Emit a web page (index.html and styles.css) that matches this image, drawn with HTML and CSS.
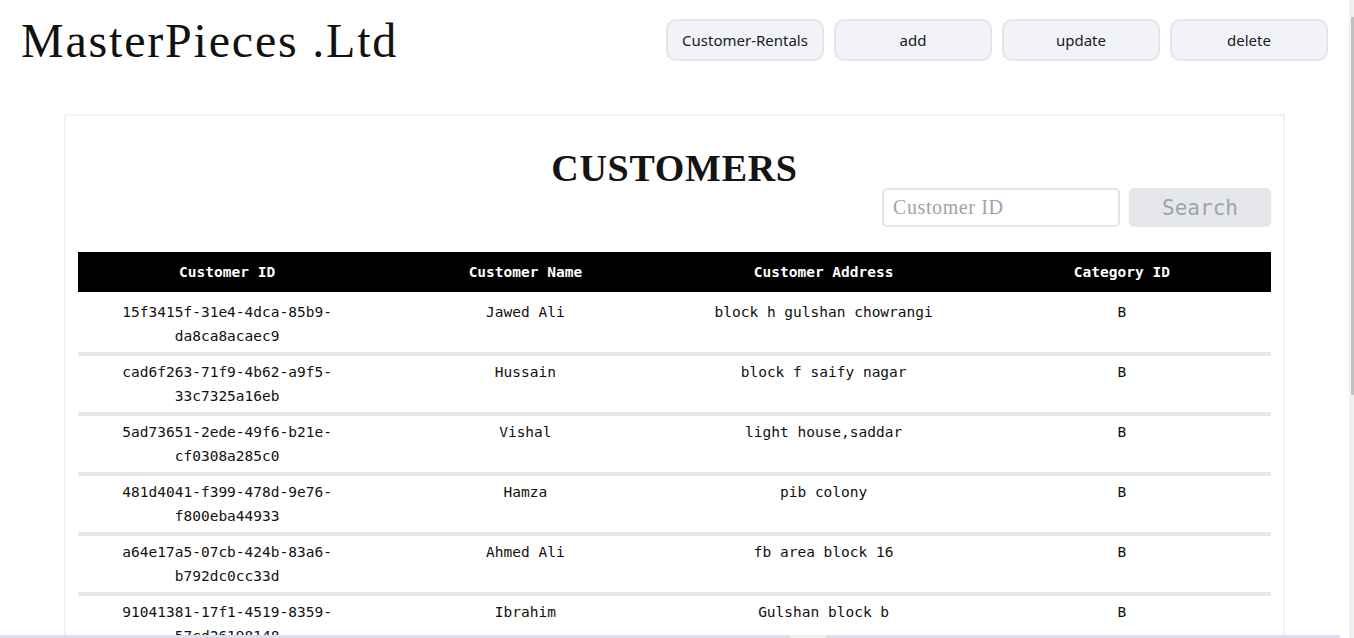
FILE: index.html
```html
<!DOCTYPE html>
<html>
<head>
<meta charset="utf-8">
<title>MasterPieces .Ltd</title>
<link rel="stylesheet" href="styles.css">
</head>
<body>
<header class="topbar">
  <h1 class="brand">MasterPieces .Ltd</h1>
  <nav class="actions">
    <button class="nav-btn">Customer-Rentals</button>
    <button class="nav-btn">add</button>
    <button class="nav-btn">update</button>
    <button class="nav-btn">delete</button>
  </nav>
</header>
<main class="card">
  <h2 class="card-title">CUSTOMERS</h2>
  <div class="search-row">
    <input class="search-input" type="text" placeholder="Customer ID">
    <button class="search-btn">Search</button>
  </div>
  <table class="data">
    <thead>
      <tr><th>Customer ID</th><th>Customer Name</th><th>Customer Address</th><th>Category ID</th></tr>
    </thead>
    <tbody>
      <tr><td>15f3415f-31e4-4dca-85b9-da8ca8acaec9</td><td>Jawed Ali</td><td>block h gulshan chowrangi</td><td>B</td></tr>
      <tr><td>cad6f263-71f9-4b62-a9f5-33c7325a16eb</td><td>Hussain</td><td>block f saify nagar</td><td>B</td></tr>
      <tr><td>5ad73651-2ede-49f6-b21e-cf0308a285c0</td><td>Vishal</td><td>light house,saddar</td><td>B</td></tr>
      <tr><td>481d4041-f399-478d-9e76-f800eba44933</td><td>Hamza</td><td>pib colony</td><td>B</td></tr>
      <tr><td>a64e17a5-07cb-424b-83a6-b792dc0cc33d</td><td>Ahmed Ali</td><td>fb area block 16</td><td>B</td></tr>
      <tr><td>91041381-17f1-4519-8359-57cd26198148</td><td>Ibrahim</td><td>Gulshan block b</td><td>B</td></tr>
      <tr><td>2b8e4c71-5d0a-4f3e-9a61-7c2e8f14d0b3</td><td>Usman</td><td>north nazimabad block a</td><td>A</td></tr>
      <tr><td>e7c91f02-3b6d-4a58-8e20-1f9d4b7a6c25</td><td>Bilal</td><td>clifton block 5</td><td>B</td></tr>
      <tr><td>0f4a6d93-8c1e-47b2-b5d7-3e60a9c28f11</td><td>Saad</td><td>defence phase 2</td><td>A</td></tr>
      <tr><td>c3d58e27-9a4f-4e16-82b0-6d1f7c3e9a40</td><td>Faisal</td><td>korangi sector 3</td><td>B</td></tr>
      <tr><td>7a19b6e4-2f03-4c8d-a7e5-94b0d2c61f38</td><td>Kashif</td><td>malir cantt</td><td>B</td></tr>
      <tr><td>d6e2f840-5b7a-41c9-9e13-8a4c0f2b7d56</td><td>Zubair</td><td>gulistan-e-johar block 7</td><td>B</td></tr>
    </tbody>
  </table>
</main>
<div class="vscroll"><div class="vscroll-thumb"></div></div>
<div class="hscroll"><div class="hscroll-gap"></div></div>
</body>
</html>
```

FILE: styles.css
```css
html {
  background: #ffffff;
}

body {
  margin: 0 5px 0 0;
  color: #111111;
  font-family: "Liberation Serif", serif;
}

.topbar {
  display: flex;
  justify-content: space-between;
  align-items: flex-start;
  padding: 0 21px 0 21px;
  height: 114px;
}

.brand {
  margin: 13px 0 0 0;
  font-family: "Liberation Serif", serif;
  font-weight: normal;
  font-size: 48px;
  letter-spacing: 1.8px;
  line-height: 56px;
  color: #111111;
}

.actions {
  display: flex;
  gap: 10px;
  margin-top: 19px;
}

.nav-btn {
  width: 158px;
  height: 42px;
  background: #f1f3f8;
  border: 2px solid #e3e6eb;
  border-radius: 10px;
  font-family: "Noto Sans", "Open Sans", sans-serif;
  font-size: 15px;
  color: #1a1a1a;
  padding: 0;
}

.card {
  width: 1221px;
  box-sizing: border-box;
  margin: 0 auto;
  border: 2px solid #f3f3f4;
  padding: 0 12px 24px 12px;
}

.card-title {
  margin: 30px 0 0 0;
  text-align: center;
  font-family: "Liberation Serif", serif;
  font-weight: bold;
  font-size: 38px;
  letter-spacing: 0.7px;
  line-height: 44px;
  color: #141414;
}

.search-row {
  display: flex;
  justify-content: flex-end;
  gap: 9px;
  margin-top: -2px;
}

.search-input {
  width: 238px;
  height: 39px;
  box-sizing: border-box;
  border: 2px solid #e4e6ea;
  border-radius: 5px;
  padding: 0 9px;
  font-family: "Liberation Serif", serif;
  font-size: 20px;
  letter-spacing: 0.6px;
  color: #333;
  outline: none;
}
.search-input::placeholder {
  color: #9ca3af;
}

.search-btn {
  width: 142px;
  height: 39px;
  border: none;
  border-radius: 5px;
  background: #e5e7eb;
  color: #9ca3af;
  font-family: "DejaVu Sans Mono", monospace;
  font-size: 21px;
  padding: 0;
}

.data {
  width: 100%;
  margin-top: 25px;
  border-collapse: collapse;
  table-layout: fixed;
  font-family: "DejaVu Sans Mono", monospace;
  font-size: 14.5px;
}

.data th {
  background: #000000;
  color: #ffffff;
  font-weight: bold;
  height: 40px;
  padding: 0;
  font-size: 14.5px;
}

.data td {
  text-align: center;
  vertical-align: top;
  padding: 4px 28px 4px 28px;
  line-height: 24px;
  border-bottom: 4px solid #e5e7eb;
  color: #111111;
}

.data tbody tr:first-child td {
  padding-top: 8px;
}

.vscroll {
  position: fixed;
  top: 0;
  right: 0;
  width: 5px;
  height: 100%;
  background: #f0f0f0;
}

.vscroll-thumb {
  position: absolute;
  top: 17px;
  right: 0;
  width: 3px;
  height: 378px;
  background: #c1c1c1;
}

.hscroll {
  position: fixed;
  left: 0;
  right: 14px;
  bottom: 0;
  height: 3px;
  background: #dadfe9;
}

.hscroll-gap {
  position: absolute;
  left: 790px;
  top: 0;
  width: 36px;
  height: 3px;
  background: #eef0f4;
}
```
